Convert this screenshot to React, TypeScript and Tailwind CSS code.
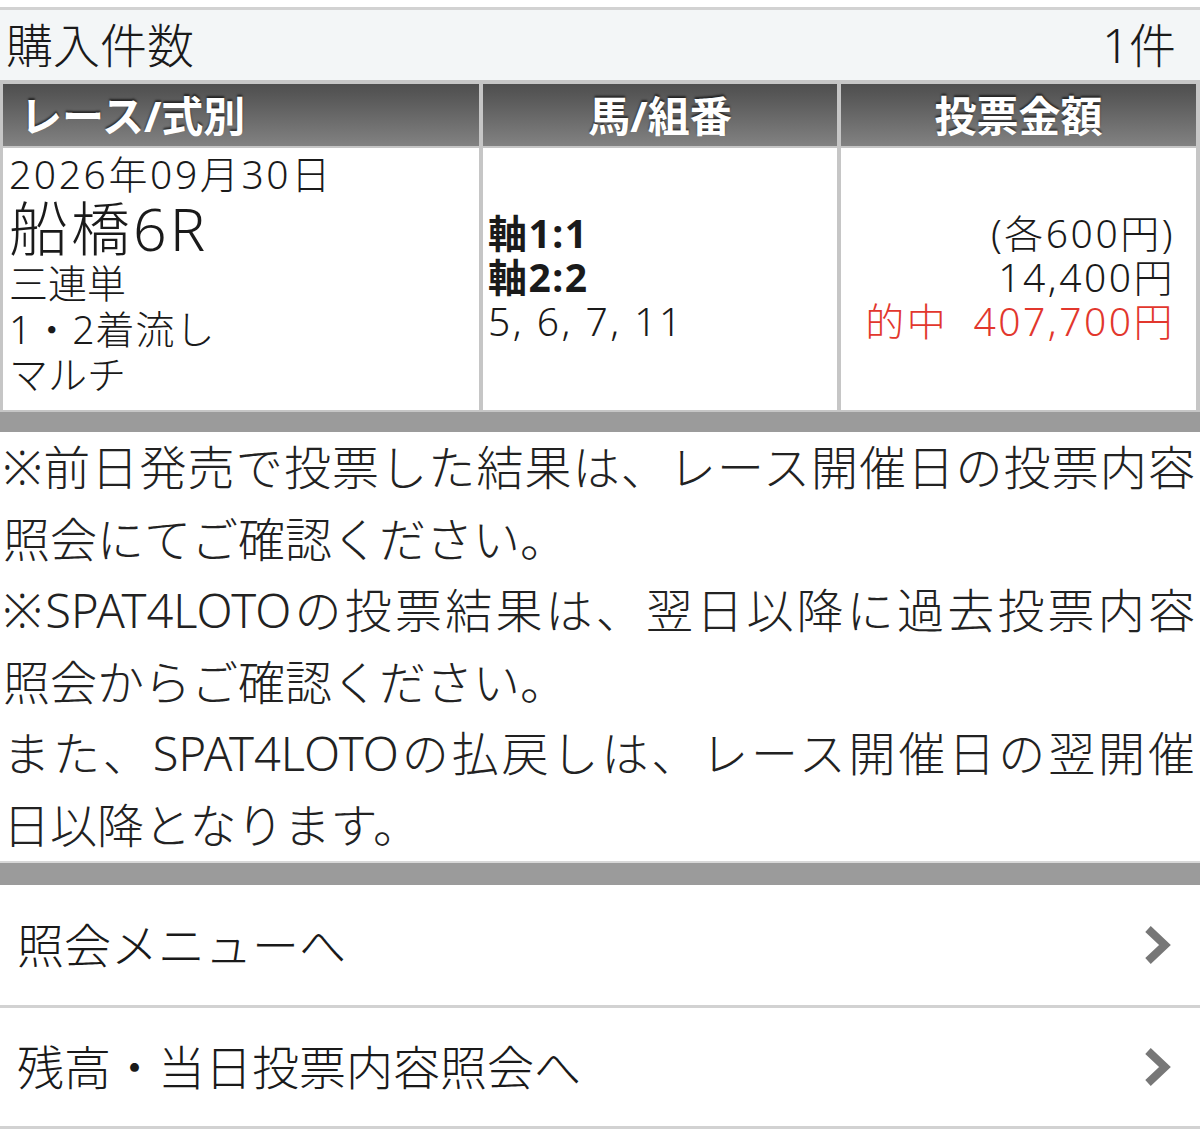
import React from "react";

const font = { fontFamily: '"Noto Sans", "Noto Sans CJK JP", sans-serif' };

function Chevron() {
  return (
    <svg width="30" height="44" viewBox="0 0 30 44" className="shrink-0">
      <polyline points="6,6 23,22 6,38" fill="none" stroke="#777777" strokeWidth="8" strokeLinejoin="miter" strokeLinecap="butt" />
    </svg>
  );
}

export default function App() {
  return (
    <div className="w-[1200px] bg-white text-[#1a1a1a] font-light" style={font}>
      <div className="h-[7px] bg-white" />
      <div className="border-t-[3px] border-[#d2d2d2] bg-[#f3f6f7] h-[73px] flex items-center justify-between pl-[6px] pr-[24px] text-[47px] leading-none">
        <span>購入件数</span>
        <span>1件</span>
      </div>
      <div className="bg-[#c6c6c6] pl-[3px] pr-[4px] pt-[4px] pb-[2px] grid grid-cols-[476px_354px_355px] gap-x-[4px] gap-y-[2px]">
        <div className="h-[62px] bg-gradient-to-b from-[#4e4e4e] to-[#828282] flex items-center pl-[17px] text-white font-bold text-[42px] [text-shadow:0_-2px_2px_rgba(0,0,0,0.6)]">
          レース/式別
        </div>
        <div className="h-[62px] bg-gradient-to-b from-[#4e4e4e] to-[#828282] flex items-center justify-center text-white font-bold text-[42px] [text-shadow:0_-2px_2px_rgba(0,0,0,0.6)]">
          馬/組番
        </div>
        <div className="h-[62px] bg-gradient-to-b from-[#4e4e4e] to-[#828282] flex items-center justify-center text-white font-bold text-[42px] [text-shadow:0_-2px_2px_rgba(0,0,0,0.6)]">
          投票金額
        </div>

        <div className="h-[262px] bg-white pl-[6px] pt-[4px] flex flex-col">
          <div className="text-[39px] leading-[44px] tracking-[2.6px]">2026年09月30日</div>
          <div className="text-[59px] leading-[64px] tracking-[3px]">船橋6R</div>
          <div className="text-[39px] leading-[46px]">三連単</div>
          <div className="text-[39px] leading-[46px] tracking-[1px]">1・2着流し</div>
          <div className="text-[39px] leading-[44px]">マルチ</div>
        </div>
        <div className="h-[262px] bg-white pl-[5px] flex flex-col justify-center pb-[4px]">
          <div className="text-[39px] leading-[44px] font-bold tracking-[1.5px]">軸1:1</div>
          <div className="text-[39px] leading-[44px] font-bold tracking-[1.5px]">軸2:2</div>
          <div className="text-[39px] leading-[44px] tracking-[2.5px]">5, 6, 7, 11</div>
        </div>
        <div className="h-[262px] bg-white pr-[21px] flex flex-col justify-center items-end pb-[4px] tracking-[2.5px]">
          <div className="text-[39px] leading-[44px]">(各600円)</div>
          <div className="text-[39px] leading-[44px]">14,400円</div>
          <div className="text-[39px] leading-[44px] text-[#e2372d]">的中&nbsp;&nbsp;407,700円</div>
        </div>
      </div>
      <div className="h-[20px] bg-[#9b9b9b]" />
      <div className="pl-[3px] pr-[5px] text-[47px] leading-[71.5px] text-[#222] whitespace-nowrap overflow-hidden">
        <div className="[text-align-last:justify]">※前日発売で投票した結果は、レース開催日の投票内容</div>
        <div>照会にてご確認ください。</div>
        <div className="[text-align-last:justify]">※SPAT4LOTOの投票結果は、翌日以降に過去投票内容</div>
        <div>照会からご確認ください。</div>
        <div className="[text-align-last:justify]">また、SPAT4LOTOの払戻しは、レース開催日の翌開催</div>
        <div>日以降となります。</div>
      </div>
      <div className="border-t-[2px] border-[#d8d8d8] h-[24px] bg-[#9b9b9b]" />
      <div className="h-[123px] border-b-[3px] border-[#d2d2d2] flex items-center justify-between pl-[17px] pr-[28px] text-[47px]">
        <span>照会メニューへ</span>
        <Chevron />
      </div>
      <div className="h-[121px] border-b-[3px] border-[#d2d2d2] flex items-center justify-between pl-[17px] pr-[28px] text-[47px]">
        <span>残高・当日投票内容照会へ</span>
        <Chevron />
      </div>
    </div>
  );
}
